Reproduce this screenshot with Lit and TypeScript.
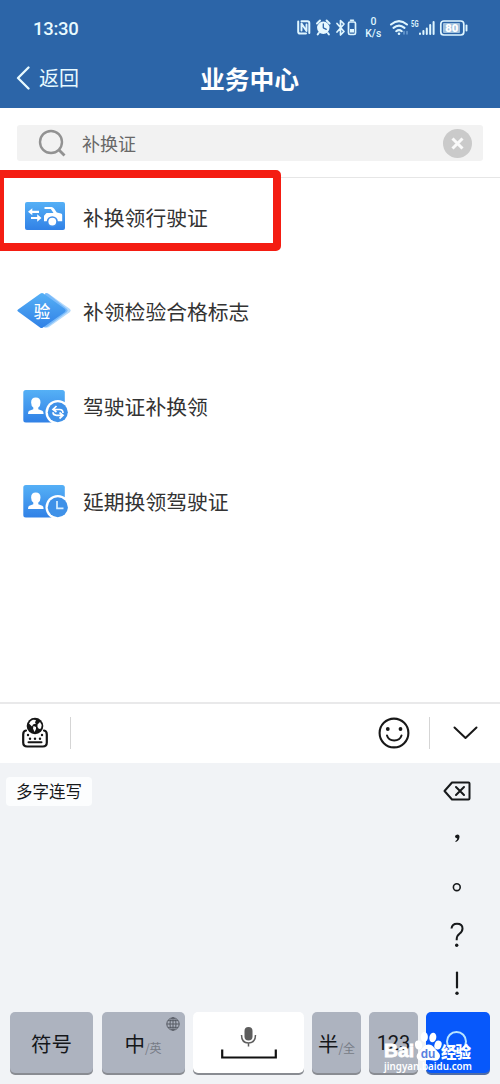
import { LitElement, html, css, svg } from "lit";
import { customElement } from "lit/decorators.js";

const statusIcons = html`
  <svg class="status-icons" width="174" height="26" viewBox="0 0 174 26">
    <g fill="none" stroke="#dff6ff" stroke-width="1.5" stroke-linecap="round" stroke-linejoin="round">
      <path d="M4.500 6.200h6q1.800 0 1.800 1.800v10M9 18.500H3Q1.200 18.500 1.200 16.700V6.500" stroke-width="2" />
      <path d="M4.500 15.500V8.500l5 7.500V9.500" stroke-width="1.900" />
      <circle cx="26.300" cy="12.800" r="6.200" fill="#e8f9ff" stroke="none" />
      <path d="M20 8.500l3-3M32.600 8.500l-3-3M21.700 18l-1 1.500M30.900 18l1 1.500" stroke-width="2" />
      <path d="M26.300 9v3.800l3 1.500" stroke="#2c65a8" stroke-width="1.300" />
      <path d="M40 8.500l7 8-3.500 3.500V5.500l3.500 3.500-7 8" stroke-width="1.700" />
      <rect x="51.500" y="7" width="7" height="12.500" rx="1.500" stroke-width="1.700" /><path d="M53.500 5.200h3" />
      <rect x="53" y="14" width="4" height="3.500" fill="#dff6ff" stroke="none" />
      <path d="M94 9.500q8-6.600 16 0M96.500 12.900q5.500-4.700 11 0M99.200 16.200q2.800-2.300 5.600 0" stroke-width="2.100" />
      <circle cx="102" cy="18.700" r="1.300" fill="#dff6ff" stroke="none" />
      <path d="M107 16.500v2.500M110 19v-2.500" stroke="#6d9fd2" stroke-width="1.500" />
      <path d="M123 19v-.5M126.400 19v-3M129.800 19v-5.500M133.200 19v-9M136.600 19v-12" stroke-width="2" />
      <rect x="143.800" y="6" width="23" height="14" rx="3" stroke-width="1.700" />
      <path d="M169.500 10.500v5" stroke-width="1.900" />
      <rect x="146" y="8" width="17" height="10" rx="1" fill="#9fc0dc" stroke="none" />
    </g>
    <g font-family="Roboto, sans-serif" fill="#dff6ff">
      <text x="76.500" y="9.800" font-size="10.500" text-anchor="middle" font-weight="500">0</text>
      <text x="76.300" y="22.300" font-size="11" text-anchor="middle" textLength="16" lengthAdjust="spacingAndGlyphs" font-weight="500">K/s</text>
      <text x="114" y="11.800" font-size="8.500" font-weight="700" textLength="7.500" lengthAdjust="spacingAndGlyphs">5G</text>
      <text x="154.700" y="17" font-size="11" text-anchor="middle" font-weight="900" fill="#fff" textLength="13" lengthAdjust="spacingAndGlyphs">80</text>
    </g>
  </svg>`;

const blueFill = (id: string) => svg`
  <defs><linearGradient id=${id} x1="0" y1="0" x2="0" y2="1">
    <stop offset="0" stop-color="#55b0f6" /><stop offset="1" stop-color="#3181e6" />
  </linearGradient></defs>`;

const vehicleIcon = html`
  <svg width="58" height="44" viewBox="0 0 58 44">
    ${blueFill("vehicle")}
    <rect x="10" y="7" width="40" height="28" rx="2" fill="url(#vehicle)" />
    <path d="M13 16.800l4.300-3.600v2.600H24v2.200h-6.700v2.300zM26.500 23l-4.300-3.700v2.600H16v2.200h6.200v2.600z" fill="#fff" />
    <path fill="#fff" d="M29.500 12h7q1.500 0 2.500 1.500l2.800 4 4.200 1q1.200.3 1.200 1.500v6.200H29v-5.500l2.500-2.700h7l-2.700-4h-6.300z" />
    <circle cx="37.300" cy="26.800" r="5.600" fill="#3f8eea" />
    <circle cx="37.300" cy="26.600" r="3.900" fill="#fff" />
  </svg>`;

const inspectionIcon = html`
  <svg width="58" height="44" viewBox="0 0 58 44">
    ${blueFill("inspection")}
    <path d="M31 5q1-1 3 0l21 15q1.500 1.500 0 3L34 38q-2 1-3 0L11 23q-2-1.500 0-3z" fill="#b3d9fb" />
    <path d="M30 4.500q1-1 3 0l19 15.500q1.500 1.500 0 3L32 38q-2 1-3 0z" fill="#79bafa" />
    <path d="M25.500 4.500q1.500-1 3 0L50 20q1.500 1.500 0 3L28 38.500q-1.500 1-3 0L3 22.500q-1.500-1 0-2z" fill="url(#inspection)" />
    <text x="27" y="28.500" font-size="16.500" font-weight="500" text-anchor="middle" fill="#fff" font-family="Noto Sans CJK SC, sans-serif">验</text>
  </svg>`;

const personCard = (id: string, mark: unknown) => html`
  <svg width="58" height="44" viewBox="0 0 58 44">
    ${blueFill(id)}
    <rect x="8.300" y="6" width="41.500" height="32.500" rx="2.500" fill=${`url(#${id})`} />
    <path fill="#fff" d="M20.800 13.500q4.700 0 4.700 5 0 3.500-2.200 5v1.800l4 1.500q1.300.6 1.300 3.200H13q0-2.600 1.300-3.200l4-1.500v-1.800q-2.200-1.500-2.200-5 0-5 4.700-5z" />
    <circle cx="42.800" cy="28.300" r="12.300" fill="#fff" />
    <circle cx="42.800" cy="28.300" r="10" fill="#3f91e8" />
    ${mark}
  </svg>`;

const services = [
  { label: "补换领行驶证", icon: vehicleIcon },
  { label: "补领检验合格标志", icon: inspectionIcon },
  {
    label: "驾驶证补换领",
    icon: personCard("swap", svg`<path d="M41.500 22l-3.500 3.500 3.500 2.500M38 25.500h6.500q3.500 0 3.500 3.500M44.500 34.500l3.500-3.200-3.500-2.800M48 31.300h-6.500q-3.500 0-3.500-3" fill="none" stroke="#fff" stroke-width="1.700" />`),
  },
  {
    label: "延期换领驾驶证",
    icon: personCard("clock", svg`<path d="M42 22v7.300h6.500" fill="none" stroke="#d9efff" stroke-width="1.700" />`),
  },
];

@customElement("app-root")
export class AppRoot extends LitElement {
  static styles = css`
    :host {
      display: flex;
      flex-direction: column;
      position: relative;
      width: 500px;
      height: 1084px;
      overflow: hidden;
      background: #fff;
      color: #333;
      font-family: "Noto Sans CJK SC", sans-serif;
    }
    svg { display: block; flex: none; }
    .header { height: 108px; flex: none; box-sizing: border-box; background: #2c65a8; color: #e8faff; }
    .status { display: flex; justify-content: space-between; align-items: center; height: 57px; padding: 0 29px 0 33px; }
    .time { font: 500 18.500px/22px Roboto, sans-serif; letter-spacing: -0.300px; }
    .status-icons { margin-top: -1px; }
    .nav { display: grid; grid-template-columns: 1fr auto 1fr; align-items: center; height: 42px; padding: 0 17px 0 16px; }
    .back { display: flex; align-items: center; gap: 9px; font-size: 20px; line-height: 30px; }
    .title { font-size: 24.800px; line-height: 36px; font-weight: 700; color: #fff; }
    .search-area { flex: none; height: 70px; box-sizing: border-box; padding: 17px 17px 0; border-bottom: 1px solid #e6e6e6; }
    .search { display: flex; align-items: center; height: 36px; padding: 0 11px 0 21px; border-radius: 3px; background: #f2f2f2; }
    .query { flex: 1; margin-left: 16px; font-size: 18px; line-height: 28px; color: #686868; }
    .services { flex: 1; }
    .service { display: flex; align-items: center; gap: 10px; height: 94.700px; padding-left: 15px; font-size: 20.800px; line-height: 30px; }
    .service:first-child { height: 86px; box-sizing: border-box; padding-bottom: 8px; }
    .highlight { position: absolute; left: -4px; top: 170px; width: 285px; height: 81px; box-sizing: border-box; border: 8px solid #f41d12; border-radius: 5px; }
    .toolbar { display: flex; align-items: center; flex: none; height: 61px; box-sizing: border-box; border-top: 2px solid #e9e9ea; padding: 0 22px 2px 21px; }
    .divider { width: 1px; height: 32px; margin-left: 21px; background: #d5d5d5; }
    .divider.right { margin: 0 23px 0 19.500px; }
    .tool-space { flex: 1; }
    .keyboard { display: flex; flex-direction: column; flex: none; height: 321px; background: #f1f3f6; color: #15171a; }
    .writing { display: flex; justify-content: space-between; flex: none; height: 249px; padding: 0 22px 0 6px; box-sizing: border-box; }
    .chip { height: 29px; margin-top: 14px; padding: 0 10px; border-radius: 4px; background: #fcfdfe; font-size: 16.500px; line-height: 28px; }
    .marks { display: flex; flex-direction: column; align-items: center; width: 42px; padding-top: 4px; }
    .mark { display: grid; place-items: center; height: 48px; }
    .keys { display: flex; height: 61px; padding: 0 10px; }
    .key { display: flex; align-items: center; justify-content: center; position: relative; height: 61px; box-sizing: border-box; border-radius: 5px; background: #adb3bf; box-shadow: 0 2px 0 #898c92; font-size: 20.500px; }
    .symbols { width: 83px; margin-right: 8.500px; }
    .language { width: 83px; margin-right: 8.500px; }
    .space { width: 111px; margin-right: 8px; background: #fff; }
    .width { width: 49px; margin-right: 8px; }
    .numbers { width: 49px; margin-right: 8px; font: 400 20px Roboto, sans-serif; }
    .enter { width: 64px; background: #0758fb; box-shadow: 0 2px 0 #506da5; }
    .alt { font-size: 12px; color: #777c86; padding-top: 10px; white-space: nowrap; }
    .globe { position: absolute; right: 5px; top: 5px; }
    .watermark { position: absolute; left: 380px; top: 1026px; }
  `;

  render() {
    return html`
      <header class="header">
        <div class="status"><span class="time">13:30</span>${statusIcons}</div>
        <div class="nav">
          <div class="back">
            <svg width="14" height="24" viewBox="0 0 14 24"><path d="M12.500 1.500L2 12l10.500 10.500" fill="none" stroke="#e8faff" stroke-width="2.300" stroke-linecap="round" stroke-linejoin="round" /></svg>
            <span>返回</span>
          </div>
          <div class="title">业务中心</div>
        </div>
      </header>
      <div class="search-area">
        <div class="search">
          <svg width="28" height="28" viewBox="0 0 28 28"><g fill="none" stroke="#929292" stroke-width="2.400"><circle cx="13" cy="13" r="11" /><path d="M20.500 20.500l6 6" stroke-width="2.800" /></g></svg>
          <span class="query">补换证</span>
          <svg width="29" height="29" viewBox="0 0 29 29"><circle cx="14.500" cy="14.500" r="14.500" fill="#cacaca" /><path d="M9.500 9.500l10 10M19.500 9.500l-10 10" stroke="#fafafa" stroke-width="3" /></svg>
        </div>
      </div>
      <main class="services">
        ${services.map((s) => html`<div class="service">${s.icon}<span>${s.label}</span></div>`)}
      </main>
      <div class="toolbar">
        <svg width="28" height="32" viewBox="0 0 28 32">
          <path d="M5 13.500q-2.800.3-2.800 4v8q0 4 4 4h15.600q4 0 4-4v-8q0-3.700-2.800-4" fill="none" stroke="#161616" stroke-width="2.200" stroke-linecap="round" />
          <circle cx="14" cy="9" r="8.300" fill="#161616" />
          <path d="M8 6.500q1.500-3 4-3.700l3 .2-1 2.500 1 1-3 1-1 2-1.500-1.500zM12.500 9l2.500 1v2l-1.500 3-1.500-3.500zM16.500 7.500l2.500-2.500 1.700 3-.7 3.500-2 .5-1.500-2z" fill="#fff" />
          <path d="M7.500 25.200h13" stroke="#161616" stroke-width="2" stroke-linecap="round" />
          <g fill="#161616"><circle cx="7" cy="18" r="1.200" /><circle cx="21" cy="18" r="1.200" /><circle cx="9" cy="21.700" r="1.200" /><circle cx="14" cy="21.700" r="1.200" /><circle cx="19" cy="21.700" r="1.200" /></g>
        </svg>
        <span class="divider"></span>
        <span class="tool-space"></span>
        <svg width="32" height="32" viewBox="0 0 32 32"><circle cx="16" cy="16" r="14.400" fill="none" stroke="#181818" stroke-width="2.100" /><circle cx="9.800" cy="12" r="1.900" fill="#181818" /><circle cx="22.500" cy="12" r="1.900" fill="#181818" /><path d="M9 18.500q1.500 5 7.200 5t7.300-5" fill="none" stroke="#181818" stroke-width="2" stroke-linecap="round" /></svg>
        <span class="divider right"></span>
        <svg width="25" height="14" viewBox="0 0 25 14"><path d="M1.500 1.500l11 10.500 11-10.500" fill="none" stroke="#181818" stroke-width="2" stroke-linecap="round" stroke-linejoin="round" /></svg>
      </div>
      <section class="keyboard">
        <div class="writing">
          <div class="chip">多字连写</div>
          <div class="marks">
            <div class="mark"><svg width="28" height="20" viewBox="0 0 28 20"><path d="M9 1.500h16.500q1 0 1 1v15q0 1-1 1H9L1.500 10z" fill="none" stroke="#17191b" stroke-width="2" stroke-linejoin="round" /><path d="M13 6l8 8M21 6l-8 8" stroke="#17191b" stroke-width="2" stroke-linecap="round" /></svg></div>
            <div class="mark"><svg width="12" height="24" viewBox="0 0 12 24"><path d="M5 8q2.700-1.500 3.500 1 .2 4.400-3.600 6l-.7-.8q2-1 2.100-2.800Q4 11.200 4 9.500q0-1 1-1.500z" fill="#17191b" /></svg></div>
            <div class="mark"><svg width="12" height="12" viewBox="0 0 12 12"><circle cx="5.800" cy="6.200" r="3.400" fill="none" stroke="#17191b" stroke-width="1.600" /></svg></div>
            <div class="mark"><svg width="16" height="26" viewBox="0 0 16 26"><path d="M2.500 6.500Q3 1.800 8 1.800q5.500 0 5.500 4.700 0 3-3 5.300-2.800 2.200-2.800 5.500v1" fill="none" stroke="#17191b" stroke-width="2" /><circle cx="7.700" cy="23.300" r="1.700" fill="#17191b" /></svg></div>
            <div class="mark"><svg width="8" height="26" viewBox="0 0 8 26"><path d="M4 2.500v15" stroke="#17191b" stroke-width="2.200" stroke-linecap="round" /><circle cx="4" cy="23.300" r="1.700" fill="#17191b" /></svg></div>
          </div>
        </div>
        <div class="keys">
          <div class="key symbols">符号</div>
          <div class="key language">中<span class="alt">/英</span>
            <svg class="globe" width="14" height="14" viewBox="0 0 14 14"><g fill="none" stroke="#565a63" stroke-width="1"><circle cx="7" cy="7" r="6.200" /><ellipse cx="7" cy="7" rx="3" ry="6.200" /><path d="M7 .8v12.400M.8 7h12.400M2 3.700h10M2 10.300h10" /></g></svg>
          </div>
          <div class="key space">
            <svg width="56" height="34" viewBox="0 0 56 34"><rect x="23.500" y="1" width="8" height="13.500" rx="4" fill="#5d5d5d" /><path d="M20.500 9q0 8 7 8T34.500 9M27.500 17V20.500" fill="none" stroke="#5d5d5d" stroke-width="1.500" /><path d="M1.200 23.500v8h53.600v-8" fill="none" stroke="#111" stroke-width="2.200" /></svg>
          </div>
          <div class="key width">半<span class="alt">/全</span></div>
          <div class="key numbers">123</div>
          <div class="key enter"><svg width="24" height="26" viewBox="0 0 24 26"><circle cx="10.500" cy="11.500" r="9.500" fill="none" stroke="#b8e4ff" stroke-width="2" /><path d="M17 18l4 4" stroke="#b8e4ff" stroke-width="2" /></svg></div>
        </div>
      </section>
      <div class="highlight"></div>
      <svg class="watermark" width="100" height="50" viewBox="0 0 100 50" fill="#fff" font-family="Liberation Sans, sans-serif">
        <text x="4" y="31.300" font-size="18.500" font-weight="700" textLength="30" lengthAdjust="spacingAndGlyphs" stroke="#fff" stroke-width=".8">Bai</text>
        <ellipse cx="38.500" cy="19" rx="3.500" ry="4.500" transform="rotate(-12 38.500 19)" />
        <ellipse cx="44.300" cy="11" rx="3.600" ry="4.900" />
        <ellipse cx="52.800" cy="11.500" rx="3.500" ry="4.800" transform="rotate(10 52.800 11.500)" />
        <ellipse cx="58" cy="19" rx="3.500" ry="4.500" transform="rotate(20 58 19)" />
        <path d="M48.500 18.500q3.500 0 5.500 3l4 4.500q3 3 1.500 6-1.500 3.500-6 2.500-5-1.200-10 0-5 .8-6.500-2.500-1.300-3 2-6l4-4.500q2-3 5.500-3z" />
        <text x="48" y="31.800" font-size="12" font-weight="700" fill="#5a7fe0" text-anchor="middle">du</text>
        <text x="61" y="32" font-size="15.500" font-weight="800" font-family="Noto Sans CJK SC, sans-serif" textLength="30">经验</text>
        <text x="4" y="43.500" font-family="Noto Sans, sans-serif" font-size="10.500" font-weight="600" textLength="88" lengthAdjust="spacingAndGlyphs">jingyan.baidu.com</text>
      </svg>
    `;
  }
}
